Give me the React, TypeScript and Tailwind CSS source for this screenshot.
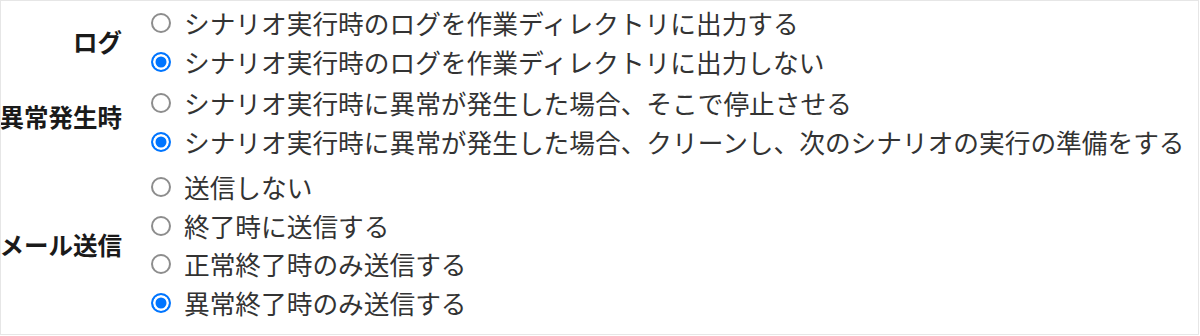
import React from 'react';

type Group = {
  label: string;
  name: string;
  options: string[];
  selected: number;
  labelClass?: string;
  className: string;
};

const groups: Group[] = [
  {
    label: 'ログ',
    name: 'log',
    options: ['シナリオ実行時のログを作業ディレクトリに出力する', 'シナリオ実行時のログを作業ディレクトリに出力しない'],
    selected: 1,
    className: 'mt-[3px]',
  },
  {
    label: '異常発生時',
    name: 'error',
    options: [
      'シナリオ実行時に異常が発生した場合、そこで停止させる',
      'シナリオ実行時に異常が発生した場合、クリーンし、次のシナリオの実行の準備をする',
    ],
    selected: 1,
    labelClass: 'pb-[10px]',
    className: 'mt-[3px]',
  },
  {
    label: 'メール送信',
    name: 'mail',
    options: ['送信しない', '終了時に送信する', '正常終了時のみ送信する', '異常終了時のみ送信する'],
    selected: 3,
    className: 'mt-[7px]',
  },
];

export default function App() {
  return (
    <div className="w-[1199px] h-[335px] overflow-hidden border border-[#e6e6e6] bg-white font-['Noto_Sans_CJK_JP',sans-serif]">
      {groups.map((g) => (
        <div key={g.name} className={`flex ${g.className}`}>
          <div
            className={`w-[121px] shrink-0 flex items-center justify-end whitespace-nowrap text-[24.5px] font-bold text-[#1a1a1a] ${g.labelClass ?? ''}`}
          >
            {g.label}
          </div>
          <div className="ml-[29px] flex flex-col">
            {g.options.map((opt, i) => (
              <label key={opt} className="h-[38.5px] flex items-center gap-[13px] whitespace-nowrap">
                <input
                  type="radio"
                  name={g.name}
                  defaultChecked={i === g.selected}
                  className="appearance-none m-0 w-[20px] h-[20px] shrink-0 rounded-full border-2 border-[#8d8d8d] bg-white checked:border-[#0075ff] checked:bg-[#0075ff] checked:shadow-[inset_0_0_0_2.5px_#fff]"
                />
                <span className="text-[25.7px] leading-none text-[#333]">{opt}</span>
              </label>
            ))}
          </div>
        </div>
      ))}
    </div>
  );
}
